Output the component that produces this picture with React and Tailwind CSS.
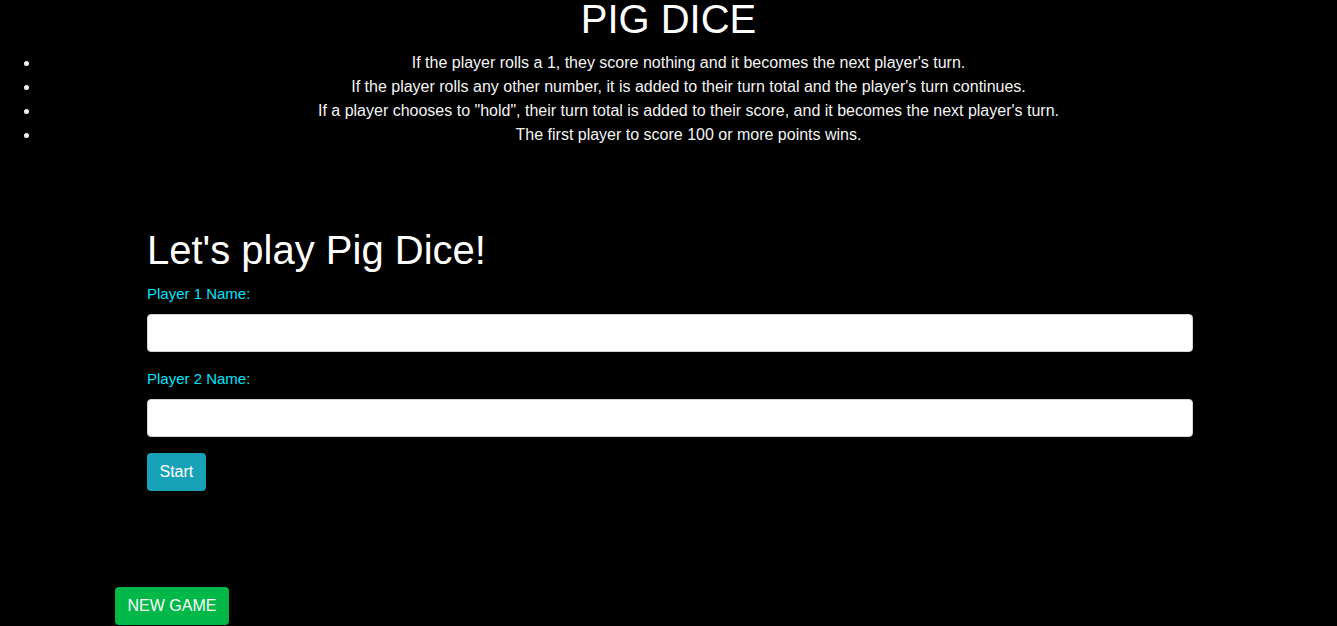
// Pig Dice — start screen: rules list, player name form, new game button

const rules = [
  "If the player rolls a 1, they score nothing and it becomes the next player's turn.",
  "If the player rolls any other number, it is added to their turn total and the player's turn continues.",
  'If a player chooses to "hold", their turn total is added to their score, and it becomes the next player\'s turn.',
  'The first player to score 100 or more points wins.',
]

export default function App() {
  return (
    <div className="min-h-screen bg-black text-white font-['Liberation_Sans',Arial,sans-serif]">

      {/* Header + rules */}
      <h1 className="text-center text-[40px] leading-[38px] mb-[13px]">PIG DICE</h1>
      <ul className="list-disc pl-10 text-center text-base leading-6 text-[#f4f4f4]">
        {rules.map(rule => <li key={rule}>{rule}</li>)}
      </ul>

      <div className="mx-auto w-[1110px]">
        {/* Player form */}
        <div className="pt-[79px] pl-[33.5px] pr-[30.5px]">
          <h2 className="text-[40px] leading-[48px] mb-2">Let's play Pig Dice!</h2>

          <div className="mb-[15px]">
            <label className="block text-[15px] leading-6 mb-2 text-[#00e4fb]">Player 1 Name:</label>
            <input type="text" className="block w-full h-[38px] bg-white rounded border border-[#ced4da] text-black px-3" />
          </div>
          <div className="mb-4">
            <label className="block text-[15px] leading-6 mb-2 text-[#00e4fb]">Player 2 Name:</label>
            <input type="text" className="block w-full h-[38px] bg-white rounded border border-[#ced4da] text-black px-3" />
          </div>

          <button className="h-[38px] px-[12.5px] rounded bg-[#17a2b8] text-white text-base">Start</button>
        </div>

        <button className="mt-24 h-[38px] px-[12.5px] rounded bg-[#00b847] text-white text-base ml-[1.5px]">NEW GAME</button>
      </div>
    </div>
  )
}
